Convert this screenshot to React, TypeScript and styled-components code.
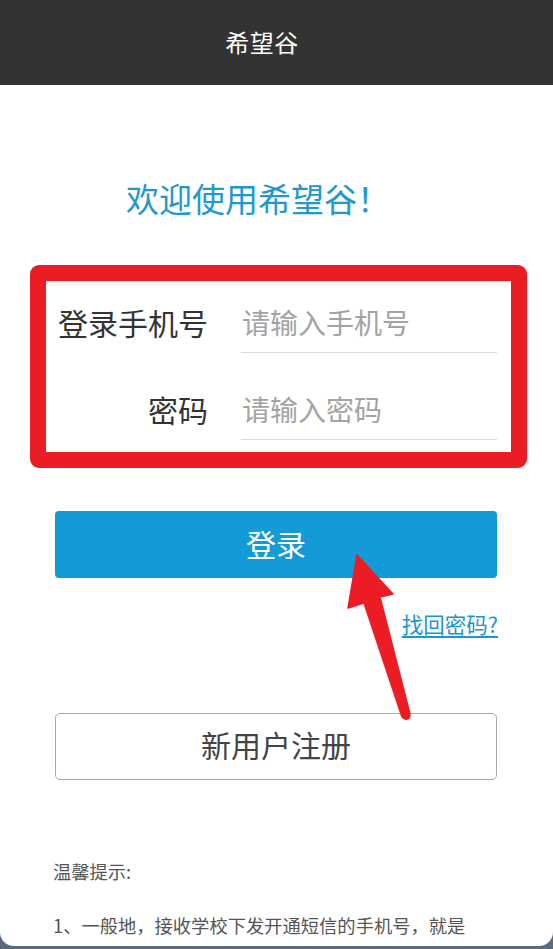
import React from "react";
import styled, { createGlobalStyle } from "styled-components";

const Global = createGlobalStyle`
  html, body { margin: 0; padding: 0; }
  body {
    background: #5b6b7b;
    font-family: "Noto Sans CJK SC", "Noto Sans", sans-serif;
  }
  * { box-sizing: border-box; }
`;

const Screen = styled.div`
  position: relative;
  width: 553px;
  height: 949px;
  display: flex;
  flex-direction: column;
  overflow: hidden;
  background: #5b6b7b;
`;

const Header = styled.header`
  height: 85px;
  flex: none;
  background: #333333;
  color: #ffffff;
  display: flex;
  align-items: center;
  justify-content: center;
  padding: 0 29px 2px 0;
  font-size: 24px;
  letter-spacing: 0.5px;
`;

const Main = styled.main`
  height: 861px;
  flex: none;
  background: #ffffff;
  border-radius: 0 0 14px 14px;
  overflow: hidden;
  display: flex;
  flex-direction: column;
  padding: 0 56px 0 55px;
`;

const Welcome = styled.h1`
  margin: 97px 0 0;
  padding-right: 36px;
  font-size: 33px;
  line-height: 33px;
  font-weight: 400;
  color: #2198d0;
  text-align: center;
  white-space: nowrap;
`;

const FormBox = styled.div`
  margin: 50px -30px 0 -25px;
  border: 16px solid #ec1c24;
  border-radius: 9px;
  padding: 14px 14px 12px 10px;
  display: flex;
  flex-direction: column;
  gap: 29px;
`;

const Row = styled.label`
  display: flex;
  align-items: center;
  height: 58px;
  gap: 33px;
`;

const FieldLabel = styled.span`
  width: 152px;
  flex: none;
  text-align: right;
  font-size: 30px;
  line-height: 40px;
  padding-bottom: 5px;
  color: #333333;
  white-space: nowrap;
`;

const Field = styled.input`
  flex: 1;
  min-width: 0;
  height: 58px;
  border: none;
  border-bottom: 1px solid #dcdcdc;
  outline: none;
  padding: 0 0 4px 1px;
  font-family: "Noto Sans CJK SC", "Noto Sans", sans-serif;
  font-size: 28px;
  color: #333;
  background: transparent;
  &::placeholder { color: #a3a3a3; }
`;

const PrimaryButton = styled.button`
  margin-top: 43px;
  height: 67px;
  width: 100%;
  border: none;
  border-radius: 4px;
  background: #139bd7;
  color: #ffffff;
  font-family: "Noto Sans CJK SC", "Noto Sans", sans-serif;
  font-size: 30px;
  padding: 0 0 4px;
`;

const ForgotRow = styled.div`
  margin-top: 34px;
  display: flex;
  justify-content: flex-end;
`;

const ForgotLink = styled.a`
  font-size: 21.5px;
  line-height: 24px;
  color: #1a96d0;
  text-decoration: underline;
  text-underline-offset: 3px;
  margin-right: -1px;
`;

const OutlineButton = styled.button`
  margin-top: 77px;
  height: 67px;
  width: 100%;
  border: 1.5px solid #ababab;
  border-radius: 5px;
  background: #ffffff;
  color: #444444;
  font-family: "Noto Sans CJK SC", "Noto Sans", sans-serif;
  font-size: 30px;
  padding: 0 0 6px;
`;

const Tips = styled.div`
  margin-top: 78px;
  margin-left: -2px;
  color: #555555;
  font-size: 18.3px;
  line-height: 27px;
`;

const TipPara = styled.p<{ $gap: number }>`
  margin: ${(p) => p.$gap}px 0 0;
  white-space: nowrap;
`;

const ArrowLayer = styled.svg`
  position: absolute;
  left: 0;
  top: 0;
  width: 553px;
  height: 949px;
  pointer-events: none;
`;

export default function App() {
  return (
    <Screen>
      <Global />
      <Header>希望谷</Header>
      <Main>
        <Welcome>欢迎使用希望谷！</Welcome>
        <FormBox>
          <Row>
            <FieldLabel>登录手机号</FieldLabel>
            <Field type="tel" placeholder="请输入手机号" />
          </Row>
          <Row>
            <FieldLabel>密码</FieldLabel>
            <Field type="password" placeholder="请输入密码" />
          </Row>
        </FormBox>
        <PrimaryButton>登录</PrimaryButton>
        <ForgotRow>
          <ForgotLink href="#">找回密码?</ForgotLink>
        </ForgotRow>
        <OutlineButton>新用户注册</OutlineButton>
        <Tips>
          <TipPara $gap={0}>温馨提示:</TipPara>
          <TipPara $gap={27}>1、一般地，接收学校下发开通短信的手机号，就是</TipPara>
        </Tips>
      </Main>
      <ArrowLayer viewBox="0 0 553 949">
        <path
          d="M357 555 L393 594 L380 597 L410 714 Q410 720 405 719 Q402 718 401 714 L364 603 L348 608 Z"
          fill="#ec1c24"
          stroke="#ec1c24"
          strokeWidth="1.5"
          strokeLinejoin="round"
        />
      </ArrowLayer>
    </Screen>
  );
}
